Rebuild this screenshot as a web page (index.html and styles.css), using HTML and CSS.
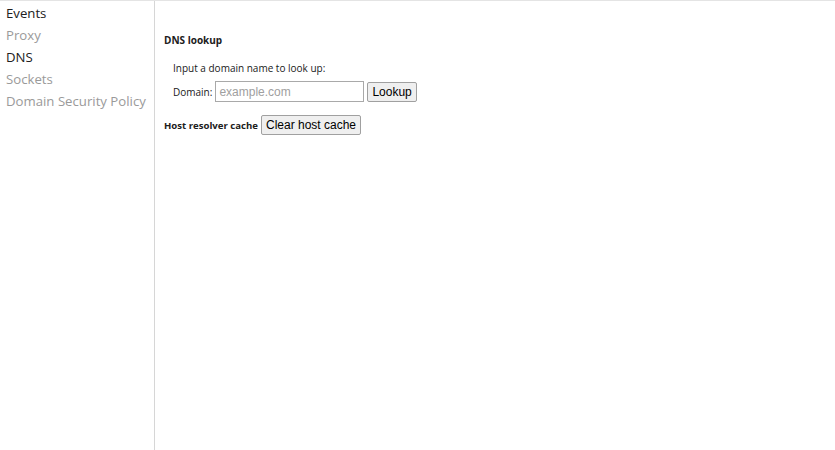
FILE: index.html
```html
<!DOCTYPE html>
<html>
<head>
<meta charset="utf-8">
<link rel="stylesheet" href="styles.css">
</head>
<body>
<div class="page">
  <nav class="sidebar">
    <div class="tab">Events</div>
    <div class="tab dim">Proxy</div>
    <div class="tab">DNS</div>
    <div class="tab dim">Sockets</div>
    <div class="tab dim">Domain Security Policy</div>
  </nav>
  <main class="main">
    <h4 class="heading">DNS lookup</h4>
    <div class="indent">
      <p class="line">Input a domain name to look up:</p>
      <div class="row">
        <span class="label">Domain:</span>
        <input class="field" type="text" placeholder="example.com">
        <button class="btn">Lookup</button>
      </div>
    </div>
    <div class="row cache">
      <span class="bold">Host resolver cache</span>
      <button class="btn">Clear host cache</button>
    </div>
  </main>
</div>
</body>
</html>
```
FILE: styles.css
```css
html, body {
  margin: 0;
  padding: 0;
  height: 100%;
  background: #fff;
}
body {
  font-family: "Open Sans", "Noto Sans", sans-serif;
}
.page {
  display: flex;
  height: 100%;
  border-top: 1px solid #e4e4e4;
  box-sizing: border-box;
}
.sidebar {
  width: 154px;
  flex: none;
  border-right: 1px solid #d6d6d6;
  padding-top: 1px;
}
.tab {
  font-size: 13.2px;
  line-height: 22px;
  padding-left: 6px;
  color: #202020;
  white-space: nowrap;
}
.tab.dim {
  color: #9a9a9a;
}
.main {
  flex: 1;
  padding: 31px 0 0 9px;
  font-size: 10px;
  color: #202020;
}
.heading {
  margin: 0 0 12px;
  font-size: 10px;
  font-weight: 700;
  line-height: 16px;
}
.indent {
  padding-left: 9px;
}
.line {
  margin: 0 0 5px;
  line-height: 16px;
}
.row {
  display: flex;
  align-items: center;
  gap: 3px;
}
.field {
  width: 149px;
  height: 21px;
  box-sizing: border-box;
  border: 1px solid #a9a9a9;
  padding: 1px 3px;
  font-family: "Liberation Sans", Arial, sans-serif;
  font-size: 12px;
  margin: 0;
}
.field::placeholder {
  color: #a0a0a0;
}
.btn {
  height: 20px;
  box-sizing: border-box;
  border: 1px solid #a0a0a0;
  background: #efefef;
  border-radius: 2px;
  padding: 0 4px;
  font-family: "Liberation Sans", Arial, sans-serif;
  font-size: 12px;
  color: #000;
  margin: 0;
}
.cache {
  margin-top: 13px;
}
.bold {
  font-weight: 700;
  font-size: 9.6px;
}
```
